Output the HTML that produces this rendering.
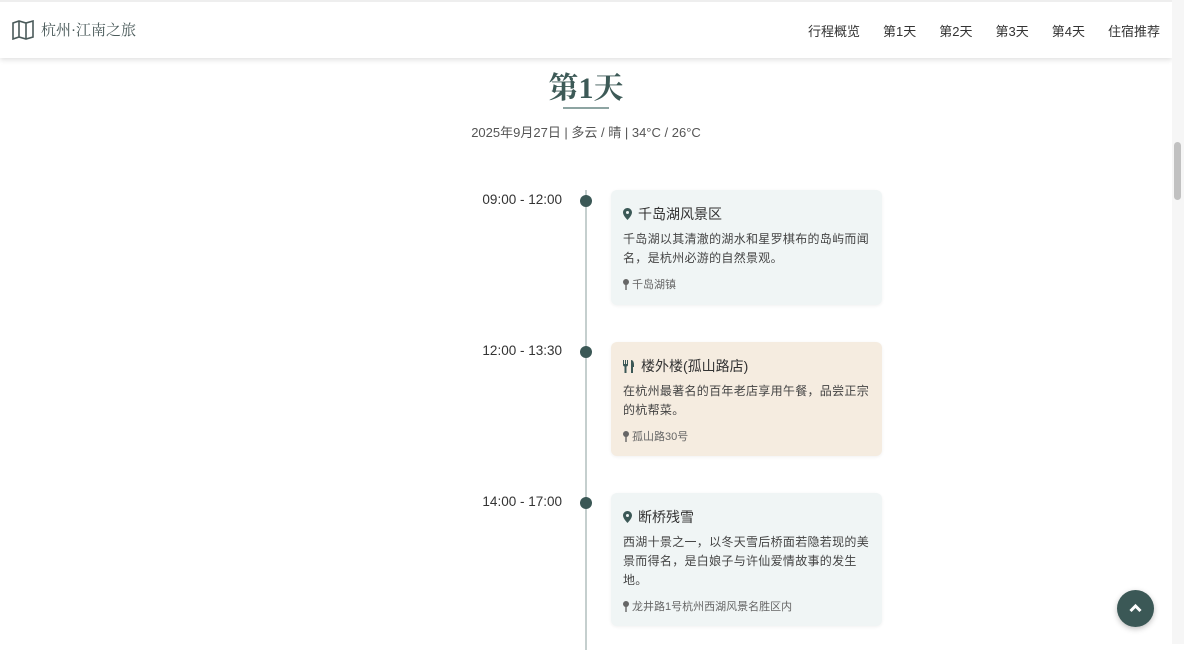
<!DOCTYPE html>
<html><head><meta charset="utf-8"><style>
*{margin:0;padding:0;box-sizing:border-box}
html,body{width:1184px;height:644px;overflow:hidden;background:#fff;font-family:"Liberation Sans","Noto Sans CJK SC",sans-serif;color:#333}
.hdr{position:absolute;left:0;top:0;width:1172px;height:58px;background:#fff;box-shadow:0 2px 5px rgba(0,0,0,.12);border-top:2px solid #eee}
.logo{position:absolute;left:12px;top:17px;display:flex;align-items:center;font-family:"Liberation Serif","Noto Serif CJK SC",serif;font-size:15px;color:#4a5a5a}
.logo svg{margin-right:7px}
.nav{position:absolute;right:12px;top:19px;font-size:13px;color:#333}
.nav span{margin-left:23px}
.sb{position:absolute;right:0;top:0;width:12px;height:644px;background:#f6f6f6}
.sb div{position:absolute;left:2px;top:142px;width:7px;height:58px;background:#c1c1c1;border-radius:4px}
h1{position:absolute;left:0;width:1172px;top:70px;text-align:center;font-family:"Liberation Serif","Noto Serif CJK SC",serif;font-weight:bold;font-size:30px;color:#3d5a57;line-height:38px}
.ul{position:absolute;left:563px;top:107px;width:46px;height:2px;background:#8da4a2}
.date{position:absolute;left:0;width:1172px;top:122px;text-align:center;font-size:13px;color:#555}
.line{position:absolute;left:585px;top:190px;width:2px;height:460px;background:#c5cfce}
.dot{position:absolute;left:580px;width:12px;height:12px;border-radius:50%;background:#3b5856}
.time{position:absolute;right:622px;font-size:13.5px;color:#333}
.card{position:absolute;left:611px;width:271px;border-radius:6px;padding:12px 10px 12px 12px;box-shadow:0 1px 3px rgba(0,0,0,.06)}
.t{font-size:14px;color:#333;display:flex;align-items:center;height:22px;margin-top:1px}
.t svg{margin-right:6px}
.d{font-size:12px;letter-spacing:.3px;line-height:19px;color:#444;margin-top:5px}
.l{font-size:11px;color:#666;margin-top:8px;display:flex;align-items:center}
.top{position:absolute;left:1117px;top:590px;width:37px;height:37px;border-radius:50%;background:#3b5856;box-shadow:0 2px 6px rgba(0,0,0,.25)}
</style></head><body>
<div class="hdr">
<div class="logo"><svg width="22" height="20" viewBox="0 0 22 20" fill="none" stroke="#4a5a5a" stroke-width="1.6"><path d="M1 3 L7 1 L14 3 L21 1 V17 L14 19 L7 17 L1 19 Z M7 1 V17 M14 3 V19"/></svg>杭州·江南之旅</div>
<div class="nav"><span>行程概览</span><span>第1天</span><span>第2天</span><span>第3天</span><span>第4天</span><span>住宿推荐</span></div>
</div>
<div class="sb"><div></div></div>
<h1>第1天</h1><div class="ul"></div>
<div class="date">2025年9月27日 | 多云 / 晴 | 34°C / 26°C</div>
<div class="line"></div>
<div class="dot" style="top:195px"></div><div class="time" style="top:192px">09:00 - 12:00</div>
<div class="dot" style="top:346px"></div><div class="time" style="top:343px">12:00 - 13:30</div>
<div class="dot" style="top:497px"></div><div class="time" style="top:494px">14:00 - 17:00</div>
<div class="card" style="top:190px;height:115px;background:#f0f5f5">
<div class="t"><svg width="9" height="12" viewBox="0 0 9 12"><path d="M4.5 0C2 0 0 2 0 4.5 0 7.5 4.5 12 4.5 12S9 7.5 9 4.5C9 2 7 0 4.5 0Z M4.5 3A1.5 1.5 0 1 1 4.5 6 1.5 1.5 0 1 1 4.5 3Z" fill="#3b5856" fill-rule="evenodd"/></svg>千岛湖风景区</div>
<div class="d">千岛湖以其清澈的湖水和星罗棋布的岛屿而闻名，是杭州必游的自然景观。</div>
<div class="l"><svg width="6" height="11" viewBox="0 0 6 11"><circle cx="3" cy="3" r="3" fill="#666"/><rect x="2.3" y="5" width="1.4" height="6" fill="#666"/></svg>&nbsp;千岛湖镇</div></div>
<div class="card" style="top:342px;height:114px;background:#f5ece0">
<div class="t"><svg width="12" height="13" viewBox="0 0 12 13" fill="#3b5856"><path d="M0 0h1v4h1V0h1v4h1V0h1v5c0 1-1 1.5-1.5 1.5V13h-2V6.5C1 6.5 0 6 0 5Z M8 0c2 0 3 2 3 5v2h-1v6H8Z"/></svg>楼外楼(孤山路店)</div>
<div class="d">在杭州最著名的百年老店享用午餐，品尝正宗的杭帮菜。</div>
<div class="l"><svg width="6" height="11" viewBox="0 0 6 11"><circle cx="3" cy="3" r="3" fill="#666"/><rect x="2.3" y="5" width="1.4" height="6" fill="#666"/></svg>&nbsp;孤山路30号</div></div>
<div class="card" style="top:493px;height:133px;background:#f0f5f5">
<div class="t"><svg width="9" height="12" viewBox="0 0 9 12"><path d="M4.5 0C2 0 0 2 0 4.5 0 7.5 4.5 12 4.5 12S9 7.5 9 4.5C9 2 7 0 4.5 0Z M4.5 3A1.5 1.5 0 1 1 4.5 6 1.5 1.5 0 1 1 4.5 3Z" fill="#3b5856" fill-rule="evenodd"/></svg>断桥残雪</div>
<div class="d">西湖十景之一，以冬天雪后桥面若隐若现的美景而得名，是白娘子与许仙爱情故事的发生地。</div>
<div class="l"><svg width="6" height="11" viewBox="0 0 6 11"><circle cx="3" cy="3" r="3" fill="#666"/><rect x="2.3" y="5" width="1.4" height="6" fill="#666"/></svg>&nbsp;龙井路1号杭州西湖风景名胜区内</div></div>
<div class="top"><svg width="37" height="37" viewBox="0 0 37 37"><path d="M13.5 21 L18.5 16 L23.5 21" stroke="#fff" stroke-width="3" fill="none"/></svg></div>
</body></html>
